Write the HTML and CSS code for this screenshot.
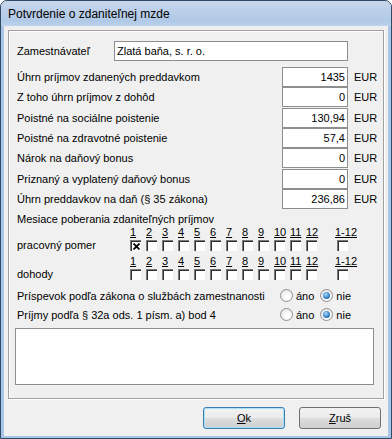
FILE: index.html
```html
<!DOCTYPE html>
<html lang="sk">
  <head>
    <meta charset="UTF-8" />
    <title>Potvrdenie o zdaniteľnej mzde</title>
    <link rel="stylesheet" href="styles.css">
  </head>
  <body>
    <div class="window">
      <div class="titlebar">Potvrdenie o zdaniteľnej mzde</div>
      <div class="client">
        <div class="group">
          <div class="employer">
            <label>Zamestnávateľ</label>
            <div class="field wide">Zlatá baňa, s. r. o.</div>
          </div>

          <div class="amounts">
            <label>Úhrn príjmov zdanených preddavkom</label><div class="field">1435</div><span>EUR</span>
            <label>Z toho úhrn príjmov z dohôd</label><div class="field">0</div><span>EUR</span>
            <label>Poistné na sociálne poistenie</label><div class="field">130,94</div><span>EUR</span>
            <label>Poistné na zdravotné poistenie</label><div class="field">57,4</div><span>EUR</span>
            <label>Nárok na daňový bonus</label><div class="field">0</div><span>EUR</span>
            <label>Priznaný a vyplatený daňový bonus</label><div class="field">0</div><span>EUR</span>
            <label>Úhrn preddavkov na daň (§ 35 zákona)</label><div class="field">236,86</div><span>EUR</span>
          </div>

          <div class="caption">Mesiace poberania zdaniteľných príjmov</div>

          <div class="months first">
            <label>pracovný pomer</label>
            <div class="cell"><span class="num">1</span><span class="box checked"><svg width="7" height="7" viewBox="0 0 7 7"><path d="M0.5 0.5 L6.5 6.5 M6.5 0.5 L0.5 6.5" stroke="#000" stroke-width="1.8"/></svg></span></div>
            <div class="cell"><span class="num">2</span><span class="box"></span></div>
            <div class="cell"><span class="num">3</span><span class="box"></span></div>
            <div class="cell"><span class="num">4</span><span class="box"></span></div>
            <div class="cell"><span class="num">5</span><span class="box"></span></div>
            <div class="cell"><span class="num">6</span><span class="box"></span></div>
            <div class="cell"><span class="num">7</span><span class="box"></span></div>
            <div class="cell"><span class="num">8</span><span class="box"></span></div>
            <div class="cell"><span class="num">9</span><span class="box"></span></div>
            <div class="cell"><span class="num">10</span><span class="box"></span></div>
            <div class="cell"><span class="num">11</span><span class="box"></span></div>
            <div class="cell"><span class="num">12</span><span class="box"></span></div>
            <div class="cell all"><span class="num">1-12</span><span class="box"></span></div>
          </div>
          <div class="months">
            <label>dohody</label>
            <div class="cell"><span class="num">1</span><span class="box"></span></div>
            <div class="cell"><span class="num">2</span><span class="box"></span></div>
            <div class="cell"><span class="num">3</span><span class="box"></span></div>
            <div class="cell"><span class="num">4</span><span class="box"></span></div>
            <div class="cell"><span class="num">5</span><span class="box"></span></div>
            <div class="cell"><span class="num">6</span><span class="box"></span></div>
            <div class="cell"><span class="num">7</span><span class="box"></span></div>
            <div class="cell"><span class="num">8</span><span class="box"></span></div>
            <div class="cell"><span class="num">9</span><span class="box"></span></div>
            <div class="cell"><span class="num">10</span><span class="box"></span></div>
            <div class="cell"><span class="num">11</span><span class="box"></span></div>
            <div class="cell"><span class="num">12</span><span class="box"></span></div>
            <div class="cell all"><span class="num">1-12</span><span class="box"></span></div>
          </div>

          <div class="choice first">
            <label>Príspevok podľa zákona o službách zamestnanosti</label>
            <span class="radio"></span><span class="opt">áno</span>
            <span class="radio on"></span><span class="opt">nie</span>
          </div>
          <div class="choice">
            <label>Príjmy podľa § 32a ods. 1 písm. a) bod 4</label>
            <span class="radio"></span><span class="opt">áno</span>
            <span class="radio on"></span><span class="opt">nie</span>
          </div>

          <div class="memo"></div>
        </div>

        <div class="buttons">
          <button class="btn default"><u>O</u>k</button>
          <button class="btn"><u>Z</u>ruš</button>
        </div>
      </div>
    </div>
  </body>
</html>
```

FILE: styles.css
```css
* {
  box-sizing: border-box;
}
body {
  margin: 0;
  font-family: "Liberation Sans", Arial, sans-serif;
  font-size: 11px;
  color: #000;
  background: #fff;
}
.window {
  width: 392px;
  height: 439px;
  border: 1px solid #2e4a66;
  border-radius: 7px 7px 0 0;
  background: #a9c6e8;
  padding: 0 3px 3px;
  display: flex;
  flex-direction: column;
}
.titlebar {
  height: 25px;
  margin: 0 -3px;
  padding-left: 7px;
  font-size: 12px;
  line-height: 26px;
  border-radius: 6px 6px 0 0;
  background: linear-gradient(#c8d7eb, #bccfe8 40%, #b0c9e7 80%, #bdd3ec);
}
.client {
  flex: 1;
  background: #f0f0f0;
  padding: 4px 4px 7px;
  display: flex;
  flex-direction: column;
}
.group {
  height: 369px;
  border: 1px solid #a0a0a0;
  box-shadow: inset 1px 1px #fff, 1px 1px #fff;
  padding: 10px 8px 0;
}
.employer {
  display: flex;
  align-items: center;
  height: 20px;
}
.employer label {
  width: 97px;
}
.field {
  height: 20px;
  border: 1px solid #8e8e8e;
  background: #fff;
  line-height: 18px;
  padding: 0 2px;
  white-space: nowrap;
}
.field.wide {
  width: 234px;
}
.amounts {
  margin-top: 6px;
  display: grid;
  grid-template-columns: 265px 66px auto;
  grid-auto-rows: 20.33px;
  align-items: center;
}
.amounts .field {
  text-align: right;
}
.amounts span {
  padding-left: 6px;
}
.caption {
  margin-top: 4px;
  line-height: 13px;
}
.months {
  display: flex;
  align-items: flex-end;
  margin-top: 6px;
}
.months.first {
  margin-top: 2px;
}
.months label {
  width: 113px;
  line-height: 13px;
  margin-bottom: -1px;
}
.cell {
  width: 16px;
  display: flex;
  flex-direction: column;
}
.cell.all {
  margin-left: 13px;
  width: 30px;
}
.cell.all .box {
  margin-left: 2px;
}
.num {
  height: 12px;
  line-height: 8px;
  text-decoration: underline;
  white-space: nowrap;
}
.box {
  width: 11px;
  height: 11px;
  background: #fff;
  border-top: 1px solid #7a7a7a;
  border-left: 1px solid #7a7a7a;
  box-shadow: inset 1px 1px #303030;
  display: flex;
  align-items: center;
  justify-content: center;
}
.box svg {
  margin: 1px 0 0 1px;
}
.choice {
  display: flex;
  align-items: center;
  height: 19px;
}
.choice.first {
  margin-top: 6px;
}
.choice label {
  width: 263px;
}
.radio {
  width: 13px;
  height: 13px;
  border-radius: 50%;
  border: 1px solid #8f8f8f;
  background: radial-gradient(circle at 60% 65%, #ffffff 20%, #e4e4e4 80%);
  display: flex;
  align-items: center;
  justify-content: center;
}
.radio.on::after {
  content: "";
  width: 7px;
  height: 7px;
  border-radius: 50%;
  background: radial-gradient(circle at 40% 35%, #a8dcff, #3a86c8 55%, #173f6e);
}
.opt {
  margin: 0 6px 0 3px;
}
.memo {
  margin: 4px 0 0 -2px;
  width: 359px;
  height: 57px;
  border: 1px solid #8e8e8e;
  background: #fff;
}
.buttons {
  display: flex;
  justify-content: flex-end;
  gap: 14px;
  margin-top: 8px;
  padding-right: 3px;
}
.btn {
  width: 82px;
  height: 22px;
  border: 1px solid #707070;
  border-radius: 3px;
  background: linear-gradient(#f2f2f2, #ebebeb 50%, #dddddd 50%, #cfcfcf);
  font-family: "Liberation Sans", Arial, sans-serif;
  font-size: 11px;
  color: #000;
  padding: 0;
}
.btn.default {
  border-color: #3c7fb1;
  box-shadow: inset 0 0 0 1px #a8e2f8;
}
```
